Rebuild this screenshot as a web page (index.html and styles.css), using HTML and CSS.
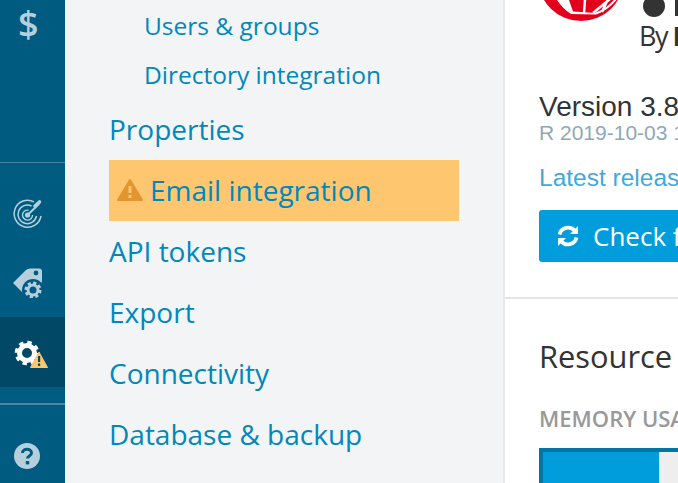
FILE: index.html
```html
<!DOCTYPE html>
<html lang="en">
<head>
<meta charset="utf-8">
<title>Settings</title>
<link rel="stylesheet" href="styles.css">
</head>
<body>
<div class="app">
  <aside class="rail">
    <div class="rail-top"><span class="dollar">$</span></div>
    <div class="rail-mid">
      <div class="rail-item">
        <svg class="ic radar" width="30" height="30" viewBox="0 0 30 30" fill="none" stroke="#b5d0dc">
          <path d="M21 2.800A13.500 13.500 0 1 0 28 17" stroke-width="1.500"/>
          <path d="M18.500 7A9.300 9.300 0 1 0 23.500 17" stroke-width="1.500"/>
          <path d="M15.500 11.200A5 5 0 1 0 19.500 16" stroke-width="1.400"/>
          <circle cx="14.500" cy="16" r="2.600" fill="#b5d0dc" stroke="none"/>
          <path d="M14.500 16L26 5" stroke-width="2"/>
          <path d="M22 7L26.500 3" stroke-width="3.600" stroke-linecap="round"/>
        </svg>
      </div>
      <div class="rail-item">
        <svg class="ic tag" width="30" height="30" viewBox="0 0 30 30">
          <path fill="#b5d0dc" d="M0 15L13 2Q14.500 .5 17 .5H26Q29 .5 29 3.500V14L20 22L13 28Z"/>
          <circle cx="23" cy="5" r="2.400" fill="#005b80"/>
          <circle cx="20" cy="22" r="11" fill="#005b80"/>
          <circle cx="20" cy="22" r="5" fill="none" stroke="#b5d0dc" stroke-width="3"/>
          <circle cx="20" cy="22" r="7.200" fill="none" stroke="#b5d0dc" stroke-width="2.600" stroke-dasharray="3.200 2.450"/>
        </svg>
      </div>
      <div class="rail-item active">
        <svg class="ic gear" width="34" height="34" viewBox="0 0 34 34">
          <circle cx="13" cy="18" r="7.500" fill="none" stroke="#fff" stroke-width="5"/>
          <circle cx="13" cy="18" r="10.500" fill="none" stroke="#fff" stroke-width="3.600" stroke-dasharray="4.300 3.950"/>
          <path fill="#fec66f" stroke="#fec66f" stroke-linejoin="round" d="M25 17L33.500 32.500H16.500Z"/>
          <rect x="24" y="21" width="2.200" height="6" fill="#004866"/>
          <rect x="24" y="28.500" width="2.200" height="2.400" fill="#004866"/>
        </svg>
      </div>
    </div>
    <div class="rail-bottom">
      <svg class="ic" width="26" height="26" viewBox="0 0 26 26">
        <circle cx="13" cy="13" r="13" fill="#b5d0dc"/>
        <path d="M8.500 10C8.500 5 17.500 5 17.500 10C17.500 13 13.500 13 13.500 15.500" fill="none" stroke="#005b80" stroke-width="3"/>
        <rect x="11.800" y="18" width="3.400" height="3.400" fill="#005b80"/>
      </svg>
    </div>
  </aside>

  <nav class="nav">
    <a class="sub">Users &amp; groups</a>
    <a class="sub">Directory integration</a>
    <a class="item">Properties</a>
    <a class="item current">
      <svg class="warn" width="26" height="24" viewBox="0 0 26 24">
        <path fill="#e39530" stroke="#e39530" stroke-width="2" stroke-linejoin="round" d="M13 2L25 22H1Z"/>
        <rect x="11.500" y="8" width="3" height="7" fill="#fec66f"/>
        <rect x="11.500" y="17" width="3" height="3" fill="#fec66f"/>
      </svg>
      Email integration
    </a>
    <a class="item">API tokens</a>
    <a class="item">Export</a>
    <a class="item">Connectivity</a>
    <a class="item">Database &amp; backup</a>
  </nav>

  <main class="main">
    <section class="about">
      <div class="brand">
        <svg class="logo" width="90" height="90" viewBox="0 0 90 90">
          <circle cx="45" cy="47" r="43" fill="#e2001a"/>
          <path fill="#fff" d="M21 69H33L37 80.500L60 82V83.500L35 83Q27 78 21 69Z"/>
          <path fill="none" stroke="#fff" stroke-width="2" d="M60 82.500Q72 78 80 68"/>
          <path fill="none" stroke="#fff" stroke-width="2.500" d="M57 82L74 68M66 81L72 68M49 69L48 82"/>
        </svg>
        <div class="brand-text">
          <div class="brand-name"><span class="dot"></span><span class="stub"></span></div>
          <div class="brand-by">By <b>I</b></div>
        </div>
      </div>
      <div class="version">Version 3.8</div>
      <div class="release">R 2019-10-03 1</div>
      <a class="latest">Latest release</a>
      <button class="check">
        <svg width="22" height="22" viewBox="0 0 22 22" fill="none" stroke="#fff" stroke-width="3.800">
          <path d="M2.500 9.500A8.800 8.800 0 0 1 18 6"/>
          <path d="M19.500 12.500A8.800 8.800 0 0 1 4 16"/>
          <path d="M21 1V9H13Z" fill="#fff" stroke="none"/>
          <path d="M1 21V13H9Z" fill="#fff" stroke="none"/>
        </svg>
        <span>Check for updates</span>
      </button>
    </section>
    <section class="resource">
      <h2>Resource usage</h2>
      <h3>MEMORY USAGE</h3>
      <div class="bar"><div class="fill"></div></div>
    </section>
  </main>
</div>
</body>
</html>
```

FILE: styles.css
```css
* { box-sizing: border-box; }
html, body { margin: 0; height: 100%; overflow: hidden; }
body { font-family: "Open Sans", sans-serif; background: #fff; }
.app { display: flex; width: 678px; height: 483px; overflow: hidden; }

.rail { width: 65px; flex: none; background: #005b80; display: flex; flex-direction: column; }
.rail-top { height: 163px; border-bottom: 1px solid #4b87a2; padding-left: 18px; }
.dollar { display: block; width: 19px; text-align: center; font-size: 36px; line-height: 48px; font-weight: 600; color: #b5d0dc; }
.rail-mid { height: 242px; padding-top: 14px; border-bottom: 2px solid #4b87a2; display: flex; flex-direction: column; }
.rail-item { height: 70px; display: flex; align-items: center; padding-left: 13px; }
.rail-item.active { background: #004866; }
.rail-bottom { flex: 1; padding: 38px 0 0 14px; }
.ic { display: block; }
.gear { margin-left: 1px; }
.tag { margin-top: 2px; }
.radar { margin-top: 3px; }

.nav { width: 438px; flex: none; background: #f3f4f6; padding: 1px 0 0 44px; display: flex; flex-direction: column; }
.nav a { color: #0088bb; display: flex; align-items: center; white-space: nowrap; }
.sub { height: 49px; padding-left: 35px; font-size: 24.5px; }
.item { height: 61px; width: 350px; padding-bottom: 2px; font-size: 28px; }
.current { background: #fec66f; gap: 7px; padding-left: 8px; }
.warn { flex: none; }

.main { flex: 1; min-width: 0; border-left: 2px solid #e8e9eb; background: #fff; }
.about { height: 299px; border-bottom: 2px solid #e5e5e5; padding-left: 34px; overflow: hidden; }
.brand { display: flex; height: 92px; margin-left: -3px; }
.logo { flex: none; margin-top: -69px; }
.brand-text { margin-left: 13px; }
.brand-name { height: 21px; display: flex; gap: 10px; align-items: flex-start; padding-left: 4px; }
.dot { width: 22px; height: 22px; margin-top: -5px; border-radius: 50%; background: #333; }
.stub { width: 4px; height: 16px; background: #333; }
.brand-by { font-size: 27px; line-height: 30px; letter-spacing: -1.5px; color: #333; white-space: nowrap; }
.version { font-family: "Liberation Sans", sans-serif; font-size: 28px; line-height: 30px; color: #333; white-space: nowrap; }
.release { font-family: "Liberation Sans", sans-serif; font-size: 21px; line-height: 22px; color: #8fa9b8; white-space: nowrap; }
.latest { display: block; margin-top: 19px; font-family: "Liberation Sans", sans-serif; font-size: 24.5px; line-height: 30px; color: #3fa9dc; white-space: nowrap; }
.check { display: flex; align-items: center; gap: 14px; margin: 17px 0 0; padding: 0 0 0 18px; width: 360px; height: 52px; border: 0; border-radius: 3px; background: #009ddc; color: #fff; font: 26px "Open Sans", sans-serif; white-space: nowrap; }
.resource { padding: 35px 0 0 34px; }
h2 { margin: 0; font-size: 30.8px; line-height: 44px; font-weight: 400; color: #333; white-space: nowrap; }
h3 { margin: 26px 0 0; font-size: 22px; line-height: 28px; font-weight: 600; color: #999; white-space: nowrap; }
.bar { margin: 16px 0 0; width: 360px; height: 60px; border: 4px solid #0077a3; background: #eee; }
.fill { width: 117px; height: 100%; background: #009ddc; border-right: 1px solid #ddd; }
```
